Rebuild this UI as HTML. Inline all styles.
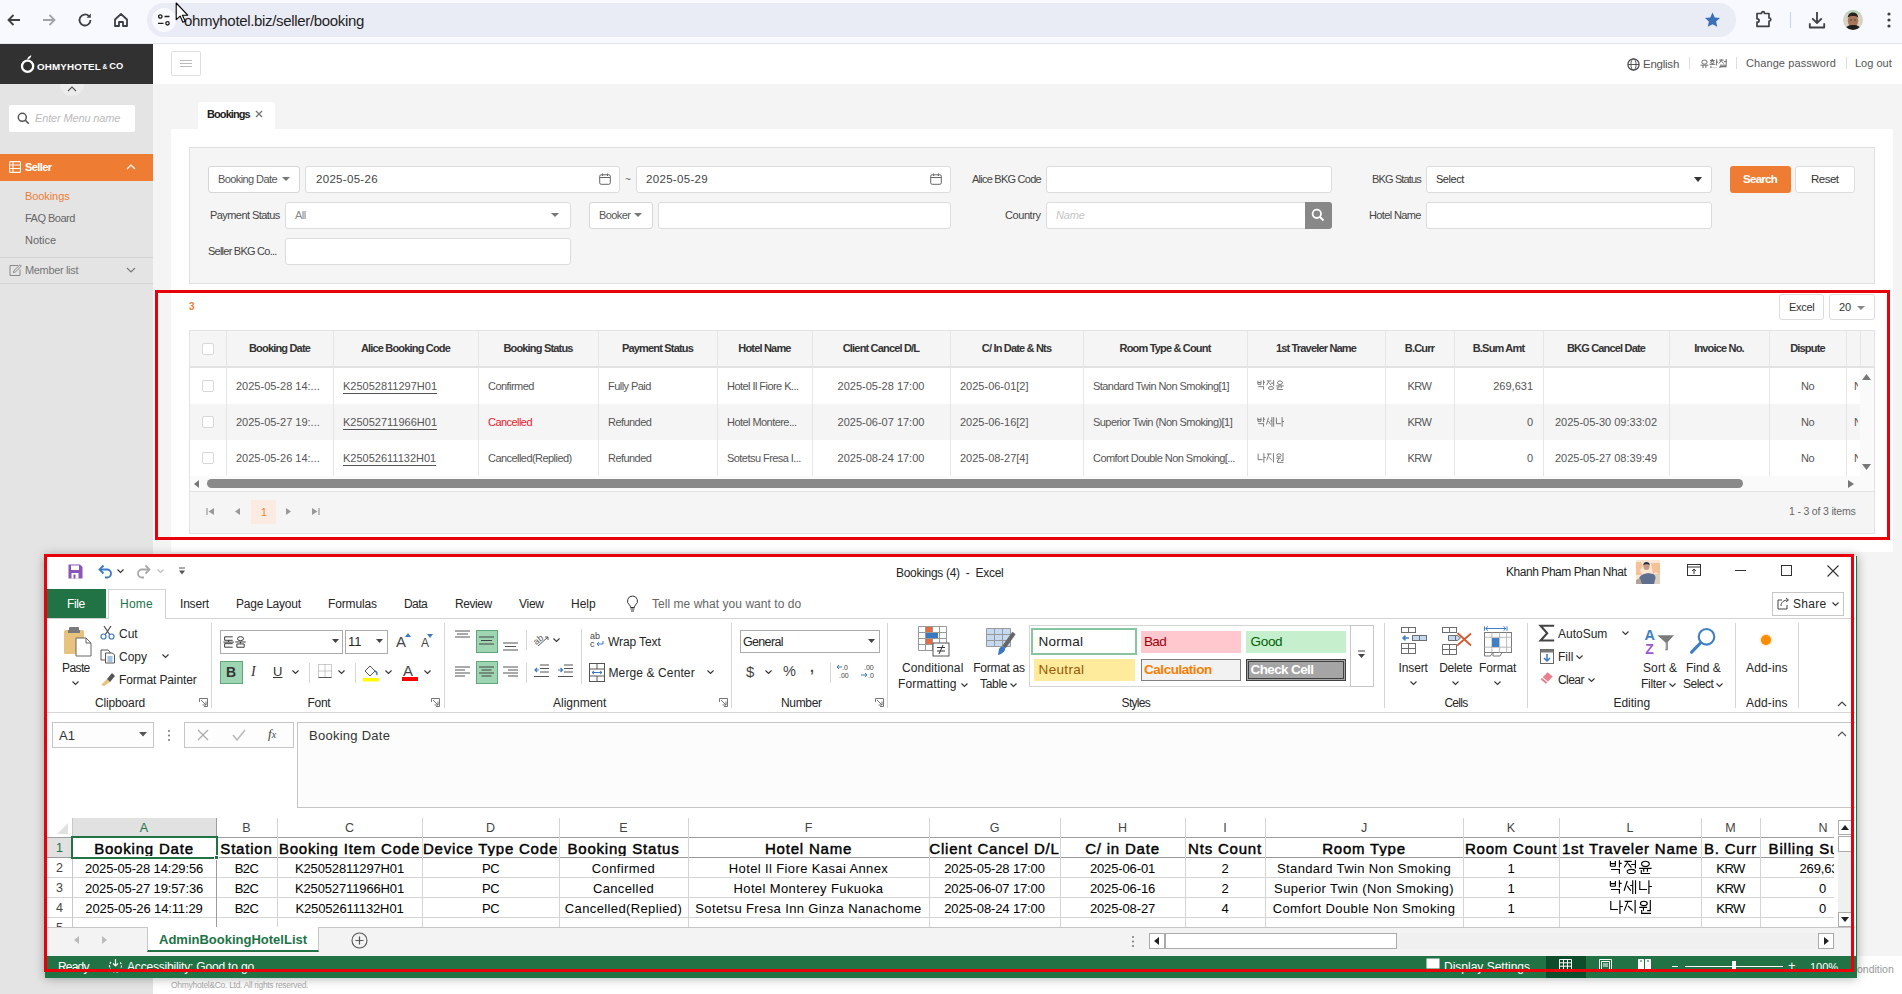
<!DOCTYPE html>
<html><head><meta charset="utf-8">
<style>
*{box-sizing:border-box;margin:0;padding:0}
html,body{width:1902px;height:994px;overflow:hidden;background:#f4f4f4;font-family:"Liberation Sans",sans-serif;color:#333;position:relative}
.a{position:absolute}
.t{position:absolute;white-space:nowrap;line-height:1}
/* browser */
#chrome{left:0;top:0;width:1902px;height:44px;background:#f8f9fe;border-bottom:1px solid #e3e5ee}
#pill{left:147px;top:3px;width:1589px;height:34px;border-radius:17px;background:#e9ebf5}
/* site */
#logo{left:0;top:44px;width:153px;height:40px;background:#313131}
#hdr{left:153px;top:44px;width:1749px;height:40px;background:#fff}
#side{left:0;top:84px;width:153px;height:910px;background:#e4e4e4}
.inp{position:absolute;background:#fff;border:1px solid #dcdcdc;border-radius:3px}
.lbl{position:absolute;white-space:nowrap;line-height:1;font-size:11px;color:#444;letter-spacing:-0.3px}
.dd{position:absolute;background:#fff;border:1px solid #d6d6d6;border-radius:3px;font-size:11px;color:#555;white-space:nowrap;line-height:1;letter-spacing:-0.3px}
.caret{position:absolute;width:0;height:0;border-left:4px solid transparent;border-right:4px solid transparent;border-top:4px solid #777}
.gh{position:absolute;top:343px;text-align:center;white-space:nowrap;line-height:1;font-size:11px;font-weight:bold;color:#333;letter-spacing:-0.82px}
.gc{position:absolute;white-space:nowrap;line-height:1;font-size:11px;color:#555;letter-spacing:-0.55px}
.gd{letter-spacing:0px}
.cb{position:absolute;width:12px;height:12px;border:1px solid #d8d8d8;border-radius:2px;background:#fff}
.rr{position:absolute;border:3px solid #e8000b}
.rb{font-size:12px;color:#262626;margin-top:1px}
.sep{width:1px;background:#d5d5d5}
.xh{position:absolute;text-align:center;white-space:nowrap;line-height:1;font-size:15px;font-weight:normal;-webkit-text-stroke:0.45px #000;color:#000;letter-spacing:0.8px;overflow:hidden}
.xc{position:absolute;text-align:center;white-space:nowrap;line-height:1;font-size:13px;color:#000}
</style></head><body>

<!-- ===== Browser chrome ===== -->
<div id="chrome" class="a"></div>
<div id="pill" class="a"></div>
<svg class="a" style="left:5px;top:11px" width="18" height="18" viewBox="0 0 18 18"><path d="M15 9H3.5M8.5 4L3.5 9l5 5" fill="none" stroke="#3c4043" stroke-width="1.8"/></svg>
<svg class="a" style="left:40px;top:11px" width="18" height="18" viewBox="0 0 18 18"><path d="M3 9h11.5M9.5 4l5 5-5 5" fill="none" stroke="#a0a3a8" stroke-width="1.8"/></svg>
<svg class="a" style="left:76px;top:11px" width="18" height="18" viewBox="0 0 18 18"><path d="M14.5 9a5.5 5.5 0 1 1-1.6-3.9" fill="none" stroke="#3c4043" stroke-width="1.8"/><path d="M14.8 2.5v4.2h-4.2z" fill="#3c4043"/></svg>
<svg class="a" style="left:112px;top:11px" width="18" height="18" viewBox="0 0 18 18"><path d="M3 8.5L9 3l6 5.5V15h-4v-4H7v4H3z" fill="none" stroke="#3c4043" stroke-width="1.8" stroke-linejoin="round"/></svg>
<div class="a" style="left:152px;top:8px;width:24px;height:24px;border-radius:12px;background:#f8f9fe"></div>
<svg class="a" style="left:156px;top:12px" width="16" height="16" viewBox="0 0 16 16"><circle cx="4.3" cy="4.5" r="1.7" fill="none" stroke="#1f1f1f" stroke-width="1.3"/><path d="M8.5 4.5h5M2 11.3h5.5" stroke="#1f1f1f" stroke-width="1.3"/><circle cx="11.5" cy="11.3" r="1.7" fill="none" stroke="#1f1f1f" stroke-width="1.3"/></svg>
<div class="t" style="left:184px;top:12.5px;font-size:15px;color:#1f1f1f;letter-spacing:-0.33px">ohmyhotel.biz/seller/booking</div>
<svg class="a" style="left:175px;top:2px" width="14" height="22" viewBox="0 0 14 22"><path d="M1.2 1v16.7l3.9-3.6 2.8 6.2 2.3-1-2.8-6.1h5.3z" fill="#fff" stroke="#000" stroke-width="1.1" stroke-linejoin="round"/></svg>
<svg class="a" style="left:1703px;top:11px" width="19" height="18" viewBox="0 0 24 24"><path d="M12 2l3 6.5 7 .8-5.2 4.8 1.5 7L12 17.6 5.7 21.1l1.5-7L2 9.3l7-.8z" fill="#3b6fb6"/></svg>
<svg class="a" style="left:1754px;top:9px" width="20" height="20" viewBox="0 0 20 20"><path d="M3 4.5h4.5v-0.3a1.5 1.5 0 0 1 3 0v0.3H15V9h0.3a1.5 1.5 0 0 1 0 3H15v5.3H3V13.2h0.4a1.7 1.7 0 0 0 0-3.4H3z" fill="none" stroke="#3c4043" stroke-width="1.7" stroke-linejoin="round"/></svg>
<div class="a" style="left:1790px;top:12px;width:1px;height:16px;background:#c6d3ef"></div>
<svg class="a" style="left:1807px;top:10px" width="20" height="20" viewBox="0 0 20 20"><path d="M10 2v11M5.2 8.3L10 13l4.8-4.7M2.8 13.2v4.3h14.4v-4.3" fill="none" stroke="#3c4043" stroke-width="1.8" stroke-linejoin="round"/></svg>
<svg class="a" style="left:1843px;top:10px" width="20" height="20" viewBox="0 0 20 20"><defs><clipPath id="cav"><circle cx="10" cy="10" r="10"/></clipPath></defs><g clip-path="url(#cav)"><rect width="20" height="20" fill="#d8d2c4"/><rect width="20" height="4" fill="#b9d3b6"/><ellipse cx="10" cy="11" rx="5.2" ry="6.5" fill="#a8765b"/><path d="M4.8 8c0-4 2.5-5.5 5.2-5.5S15.2 4 15.2 8c-1-1.5-2.5-2-5.2-2S5.8 6.5 4.8 8z" fill="#2a2220"/><path d="M2 20c1-4 4-5 8-5s7 1 8 5z" fill="#1e1e1e"/><path d="M7.3 10h1.6M11.1 10h1.6" stroke="#3a2a22" stroke-width="0.9"/></g></svg>
<svg class="a" style="left:1886px;top:11px" width="6" height="18" viewBox="0 0 6 18"><circle cx="3" cy="3" r="1.6" fill="#3c4043"/><circle cx="3" cy="9" r="1.6" fill="#3c4043"/><circle cx="3" cy="15" r="1.6" fill="#3c4043"/></svg>

<!-- ===== Site header ===== -->
<div id="logo" class="a"></div>
<svg class="a" style="left:19px;top:53px" width="18" height="22" viewBox="0 0 18 22"><circle cx="8.6" cy="13.2" r="5.6" fill="none" stroke="#fff" stroke-width="2.3"/><path d="M8.2 6.8c0.2-2.2 1.5-4 4.2-4.6c-0.3 2.2-1.6 3.6-4.2 4.6z" fill="#fff"/></svg>
<div class="t" style="left:37px;top:61.6px;font-size:9.8px;font-weight:bold;color:#fff;letter-spacing:0.15px">OHMYHOTEL</div>
<div class="t" style="left:102.5px;top:64px;font-size:6.5px;font-weight:bold;color:#fff">&amp;</div>
<div class="t" style="left:109.3px;top:61.6px;font-size:9.3px;font-weight:bold;color:#fff">CO</div>
<div id="hdr" class="a"></div>
<div class="a" style="left:171px;top:51px;width:30px;height:25px;border:1px solid #dedede;border-radius:2px;background:#fff"></div>
<div class="a" style="left:180px;top:60px;width:12px;height:1px;background:#bbb"></div>
<div class="a" style="left:180px;top:63px;width:12px;height:1px;background:#bbb"></div>
<div class="a" style="left:180px;top:66px;width:12px;height:1px;background:#bbb"></div>

<svg class="a" style="left:1627px;top:57.5px" width="13" height="13" viewBox="0 0 13 13"><circle cx="6.5" cy="6.5" r="5.6" fill="none" stroke="#444" stroke-width="1.2"/><ellipse cx="6.5" cy="6.5" rx="2.6" ry="5.6" fill="none" stroke="#444" stroke-width="0.9"/><path d="M1 6.5h11" stroke="#444" stroke-width="0.9"/></svg>
<div class="t" style="left:1643px;top:59px;font-size:11.5px;color:#555;letter-spacing:-0.24px">English</div>
<div class="a" style="left:1689px;top:57px;width:1px;height:12px;background:#ddd"></div>
<svg class="a" style="left:1699.5px;top:58.7px" width="27.5" height="9.6" viewBox="0 0 43.2 14" preserveAspectRatio="none"><g fill="none" stroke="#555" stroke-width="1.3"><path transform="translate(0.0 0)" d="M2.80 4.50a4.2 3 0 1 0 8.40 0a4.2 3 0 1 0 -8.40 0M0.8 9H13.2M4.8 9V13.8M9.2 9V13.8"/><path transform="translate(14.6 0)" d="M3.5 0.8H6M1 2.3H8.5M2.30 4.80a2.5 1.6 0 1 0 5.00 0a2.5 1.6 0 1 0 -5.00 0M4.8 6.4V7.8M0.5 7.8H9.5M11.5 0.2V9.5M11.5 4.5H13.8M2.5 10V13.5H12.5"/><path transform="translate(29.2 0)" d="M4.5 0.2V1.6M1 1.6H8M4.5 1.6L0.8 6.5M4.5 3.5L8.2 6.5M12 0.2V8.5M8.5 3.8H12M2 9H12V11H2V13.5H12.5"/></g></svg>
<div class="a" style="left:1736px;top:57px;width:1px;height:12px;background:#ddd"></div>
<div class="t" style="left:1746px;top:58.3px;font-size:11px;color:#555;letter-spacing:0.09px">Change password</div>
<div class="a" style="left:1846px;top:57px;width:1px;height:12px;background:#ddd"></div>
<div class="t" style="left:1855px;top:58.3px;font-size:11px;color:#555">Log out</div>

<!-- ===== Sidebar ===== -->
<div id="side" class="a"></div>
<div class="a" style="left:60px;top:72px;width:24px;height:24px;border-radius:12px;background:#ececec;clip-path:inset(12px 0 0 0)"></div>
<svg class="a" style="left:67px;top:86px" width="10" height="6" viewBox="0 0 10 6"><path d="M1 5l4-4 4 4" fill="none" stroke="#555" stroke-width="1.1"/></svg>
<div class="a" style="left:9px;top:105px;width:126px;height:27px;background:#fff;border-radius:2px"></div>
<svg class="a" style="left:17px;top:112px" width="13" height="13" viewBox="0 0 13 13"><circle cx="5.3" cy="5.3" r="4" fill="none" stroke="#555" stroke-width="1.5"/><path d="M8.3 8.3l3.5 3.5" stroke="#555" stroke-width="1.6"/></svg>
<div class="t" style="left:35px;top:113px;font-size:11px;color:#bbb;font-style:italic;letter-spacing:-0.15px">Enter Menu name</div>
<div class="a" style="left:0;top:154px;width:153px;height:27px;background:#ee7d33"></div>
<svg class="a" style="left:9px;top:161px" width="12" height="12" viewBox="0 0 12 12"><rect x="0.6" y="0.6" width="10.8" height="10.8" rx="1" fill="none" stroke="#fff" stroke-width="1.1"/><path d="M0.6 4h10.8M0.6 7.5h10.8M4 0.6v10.8" stroke="#fff" stroke-width="1"/></svg>
<div class="t" style="left:25px;top:162px;font-size:11px;font-weight:bold;color:#fff;letter-spacing:-0.57px">Seller</div>
<svg class="a" style="left:126px;top:164px" width="10" height="6" viewBox="0 0 10 6"><path d="M1 5l4-4 4 4" fill="none" stroke="#fff" stroke-width="1.2"/></svg>
<div class="t" style="left:25px;top:191px;font-size:11px;color:#ee7d33;letter-spacing:-0.08px">Bookings</div>
<div class="t" style="left:25px;top:213px;font-size:11px;color:#666;letter-spacing:-0.51px">FAQ Board</div>
<div class="t" style="left:25px;top:235px;font-size:11px;color:#666;letter-spacing:-0.02px">Notice</div>
<div class="a" style="left:0;top:257px;width:153px;height:1px;background:#d4d4d4"></div>
<svg class="a" style="left:9px;top:264px" width="13" height="13" viewBox="0 0 13 13"><path d="M9 1.5h-8v10h10v-6" fill="none" stroke="#888" stroke-width="1"/><path d="M4.5 8.5l.5-2L11 0.8l1.3 1.3-6 5.9z" fill="none" stroke="#888" stroke-width="1"/></svg>
<div class="t" style="left:25px;top:265px;font-size:11px;color:#777;letter-spacing:-0.34px">Member list</div>
<svg class="a" style="left:126px;top:267px" width="10" height="6" viewBox="0 0 10 6"><path d="M1 1l4 4 4-4" fill="none" stroke="#777" stroke-width="1.1"/></svg>
<div class="a" style="left:0;top:283px;width:153px;height:1px;background:#d4d4d4"></div>

<!-- ===== Main ===== -->
<div class="a" style="left:198px;top:102px;width:77px;height:27px;background:#fff;border-radius:3px 3px 0 0"></div>
<div class="t" style="left:207px;top:109px;font-size:11px;font-weight:bold;color:#222;letter-spacing:-0.91px">Bookings</div>
<svg class="a" style="left:255px;top:110px" width="8" height="8" viewBox="0 0 8 8"><path d="M1 1l6 6M7 1L1 7" stroke="#777" stroke-width="1.4"/></svg>
<div class="a" style="left:171px;top:129px;width:1722px;height:423px;background:#fff"></div>

<!-- filter box -->
<div class="a" style="left:189px;top:147px;width:1686px;height:137px;background:#f5f5f5;border:1px solid #e0e0e0"></div>
<div class="dd" style="left:208px;top:166px;width:92px;height:27px;padding:7px 0 0 9px;letter-spacing:-0.59px">Booking Date</div>
<div class="caret" style="left:282px;top:177px"></div>
<div class="inp" style="left:305px;top:166px;width:315px;height:27px"></div>
<div class="t" style="left:316px;top:174px;font-size:11.5px;color:#444;letter-spacing:0.31px">2025-05-26</div>
<svg class="a" style="left:599px;top:173px" width="12" height="12" viewBox="0 0 12 12"><rect x="0.7" y="1.8" width="10.6" height="9.5" rx="1.5" fill="none" stroke="#666" stroke-width="1"/><path d="M0.7 4.5h10.6M3.5 0.5v2.5M8.5 0.5v2.5" stroke="#666" stroke-width="1"/></svg>
<div class="t" style="left:625px;top:175px;font-size:10px;color:#666">~</div>
<div class="inp" style="left:636px;top:166px;width:315px;height:27px"></div>
<div class="t" style="left:646px;top:174px;font-size:11.5px;color:#444;letter-spacing:0.32px">2025-05-29</div>
<svg class="a" style="left:930px;top:173px" width="12" height="12" viewBox="0 0 12 12"><rect x="0.7" y="1.8" width="10.6" height="9.5" rx="1.5" fill="none" stroke="#666" stroke-width="1"/><path d="M0.7 4.5h10.6M3.5 0.5v2.5M8.5 0.5v2.5" stroke="#666" stroke-width="1"/></svg>
<div class="lbl" style="left:972px;top:174px;letter-spacing:-0.76px">Alice BKG Code</div>
<div class="inp" style="left:1046px;top:166px;width:286px;height:27px"></div>
<div class="lbl" style="left:1372px;top:174px;letter-spacing:-0.85px">BKG Status</div>
<div class="inp" style="left:1426px;top:166px;width:286px;height:27px"></div>
<div class="t" style="left:1436px;top:174px;font-size:11px;color:#333;letter-spacing:-0.47px">Select</div>
<div class="caret" style="left:1694px;top:177px;border-top-color:#333;border-width:5px 4px 0 4px"></div>
<div class="a" style="left:1730px;top:166px;width:61px;height:27px;background:#ee7d33;border-radius:3px"></div>
<div class="t" style="left:1743px;top:174px;font-size:11.5px;font-weight:bold;color:#fff;letter-spacing:-0.72px">Search</div>
<div class="inp" style="left:1795px;top:166px;width:60px;height:27px;border-color:#ddd"></div>
<div class="t" style="left:1811px;top:174px;font-size:11.5px;color:#333;letter-spacing:-0.52px">Reset</div>

<div class="lbl" style="left:210px;top:210px;letter-spacing:-0.57px">Payment Status</div>
<div class="inp" style="left:285px;top:202px;width:286px;height:27px"></div>
<div class="t" style="left:295px;top:210px;font-size:11px;color:#888;letter-spacing:-0.53px">All</div>
<div class="caret" style="left:551px;top:213px"></div>
<div class="dd" style="left:589px;top:202px;width:64px;height:27px;padding:7px 0 0 9px;letter-spacing:-0.6px">Booker</div>
<div class="caret" style="left:634px;top:213px"></div>
<div class="inp" style="left:658px;top:202px;width:293px;height:27px"></div>
<div class="lbl" style="left:1005px;top:210px;letter-spacing:-0.43px">Country</div>
<div class="inp" style="left:1046px;top:202px;width:286px;height:27px"></div>
<div class="t" style="left:1056px;top:210px;font-size:11px;color:#c4c4c4;font-style:italic;letter-spacing:-0.17px">Name</div>
<div class="a" style="left:1305px;top:202px;width:27px;height:27px;background:#888;border-radius:0 3px 3px 0"></div>
<svg class="a" style="left:1311px;top:208px" width="14" height="14" viewBox="0 0 14 14"><circle cx="5.8" cy="5.8" r="4.2" fill="none" stroke="#fff" stroke-width="1.8"/><path d="M9 9l3.5 3.5" stroke="#fff" stroke-width="2"/></svg>
<div class="lbl" style="left:1369px;top:210px;letter-spacing:-0.64px">Hotel Name</div>
<div class="inp" style="left:1426px;top:202px;width:286px;height:27px"></div>

<div class="lbl" style="left:208px;top:246px;letter-spacing:-0.76px">Seller BKG Co...</div>
<div class="inp" style="left:285px;top:238px;width:286px;height:27px"></div>

<!-- grid -->
<div class="a" style="left:158px;top:293px;width:13px;height:244px;background:#f4f4f4"></div>
<div class="t" style="left:189px;top:302px;font-size:10px;font-weight:bold;color:#ee7d33">3</div>
<div class="a" style="left:1779px;top:294px;width:45px;height:26px;border:1px solid #ddd;border-radius:3px;background:#fff"></div>
<div class="t" style="left:1789px;top:302px;font-size:11px;color:#333;letter-spacing:-0.3px">Excel</div>
<div class="a" style="left:1829px;top:294px;width:46px;height:26px;border:1px solid #ddd;border-radius:3px;background:#fff"></div>
<div class="t" style="left:1839px;top:302px;font-size:11px;color:#333">20</div>
<div class="caret" style="left:1857px;top:306px;border-top-color:#888"></div>
<div class="a" style="left:189px;top:330px;width:1686px;height:204px;border:1px solid #e3e3e3;background:#fff"></div>
<div class="a" style="left:190px;top:331px;width:1684px;height:35px;background:#f5f5f5"></div>
<div class="a" style="left:1860px;top:331px;width:1px;height:35px;background:#e6e6e6"></div>
<div class="a" style="left:190px;top:366px;width:1684px;height:2px;background:#e2e2e2"></div>
<div class="a" style="left:190px;top:404px;width:1670px;height:36px;background:#f5f5f5"></div>
<div class="a" style="left:190px;top:476px;width:1684px;height:15px;background:#fafafa"></div>
<div class="a" style="left:207px;top:479px;width:1536px;height:9px;border-radius:4.5px;background:#898989"></div>
<svg class="a" style="left:194px;top:479.5px" width="6" height="8" viewBox="0 0 6 8"><path d="M5 0v8L0 4z" fill="#777"/></svg>
<svg class="a" style="left:1848px;top:479.5px" width="6" height="8" viewBox="0 0 6 8"><path d="M0 0v8l6-4z" fill="#777"/></svg>
<div class="a" style="left:1860px;top:368px;width:14px;height:108px;background:#fafafa"></div>
<svg class="a" style="left:1862px;top:374px" width="9" height="6" viewBox="0 0 9 6"><path d="M0 6h9L4.5 0z" fill="#777"/></svg>
<svg class="a" style="left:1862px;top:464px" width="9" height="6" viewBox="0 0 9 6"><path d="M0 0h9L4.5 6z" fill="#777"/></svg>
<div class="a" style="left:190px;top:491px;width:1684px;height:42px;background:#f5f5f5;border-top:1px solid #e3e3e3"></div>
<div class="a" style="left:251px;top:500px;width:25px;height:24px;background:#fbebe0"></div>
<div class="t" style="left:261px;top:507px;font-size:10.5px;color:#ee7d33">1</div>
<svg class="a" style="left:206px;top:507px" width="9" height="9" viewBox="0 0 9 9"><path d="M1 1v7" stroke="#999" stroke-width="1.2"/><path d="M8 1v7L2.5 4.5z" fill="#999"/></svg>
<svg class="a" style="left:234px;top:507px" width="7" height="9" viewBox="0 0 7 9"><path d="M6 1v7L1 4.5z" fill="#999"/></svg>
<svg class="a" style="left:285px;top:507px" width="7" height="9" viewBox="0 0 7 9"><path d="M1 1v7l5-3.5z" fill="#999"/></svg>
<svg class="a" style="left:311px;top:507px" width="9" height="9" viewBox="0 0 9 9"><path d="M8 1v7" stroke="#999" stroke-width="1.2"/><path d="M1 1v7l5.5-3.5z" fill="#999"/></svg>
<div class="t" style="left:1789px;top:506px;font-size:10.5px;color:#666;letter-spacing:-0.18px">1 - 3 of 3 items</div>
<div class="a" style="left:226px;top:331px;width:1px;height:145px;background:#e6e6e6"></div>
<div class="a" style="left:333px;top:331px;width:1px;height:145px;background:#e6e6e6"></div>
<div class="a" style="left:478px;top:331px;width:1px;height:145px;background:#e6e6e6"></div>
<div class="a" style="left:598px;top:331px;width:1px;height:145px;background:#e6e6e6"></div>
<div class="a" style="left:717px;top:331px;width:1px;height:145px;background:#e6e6e6"></div>
<div class="a" style="left:812px;top:331px;width:1px;height:145px;background:#e6e6e6"></div>
<div class="a" style="left:950px;top:331px;width:1px;height:145px;background:#e6e6e6"></div>
<div class="a" style="left:1083px;top:331px;width:1px;height:145px;background:#e6e6e6"></div>
<div class="a" style="left:1247px;top:331px;width:1px;height:145px;background:#e6e6e6"></div>
<div class="a" style="left:1385px;top:331px;width:1px;height:145px;background:#e6e6e6"></div>
<div class="a" style="left:1454px;top:331px;width:1px;height:145px;background:#e6e6e6"></div>
<div class="a" style="left:1543px;top:331px;width:1px;height:145px;background:#e6e6e6"></div>
<div class="a" style="left:1669px;top:331px;width:1px;height:145px;background:#e6e6e6"></div>
<div class="a" style="left:1769px;top:331px;width:1px;height:145px;background:#e6e6e6"></div>
<div class="a" style="left:1846px;top:331px;width:1px;height:145px;background:#e6e6e6"></div>
<div class="gh" style="left:226px;width:107px">Booking Date</div>
<div class="gh" style="left:333px;width:145px">Alice Booking Code</div>
<div class="gh" style="left:478px;width:120px">Booking Status</div>
<div class="gh" style="left:598px;width:119px">Payment Status</div>
<div class="gh" style="left:717px;width:95px">Hotel Name</div>
<div class="gh" style="left:812px;width:138px">Client Cancel D/L</div>
<div class="gh" style="left:950px;width:133px">C/ In Date &amp; Nts</div>
<div class="gh" style="left:1083px;width:164px">Room Type &amp; Count</div>
<div class="gh" style="left:1247px;width:138px">1st Traveler Name</div>
<div class="gh" style="left:1385px;width:69px">B.Curr</div>
<div class="gh" style="left:1454px;width:89px">B.Sum Amt</div>
<div class="gh" style="left:1543px;width:126px">BKG Cancel Date</div>
<div class="gh" style="left:1669px;width:100px">Invoice No.</div>
<div class="gh" style="left:1769px;width:77px">Dispute</div>
<div class="cb" style="left:202px;top:343px"></div>
<div class="cb" style="left:202px;top:380px"></div>
<div class="gc gd" style="left:226px;width:107px;top:381px;padding-left:10px;text-align:left;">2025-05-28 14:...</div>
<div class="gc gd" style="left:333px;width:145px;top:381px;padding-left:10px;text-align:left;"><span style="border-bottom:1px solid #555;padding-bottom:1px">K25052811297H01</span></div>
<div class="gc" style="left:478px;width:120px;top:381px;padding-left:10px;text-align:left;">Confirmed</div>
<div class="gc" style="left:598px;width:119px;top:381px;padding-left:10px;text-align:left;">Fully Paid</div>
<div class="gc" style="left:717px;width:95px;top:381px;padding-left:10px;text-align:left;">Hotel Il Fiore K...</div>
<div class="gc gd" style="left:812px;width:138px;top:381px;text-align:center;">2025-05-28 17:00</div>
<div class="gc gd" style="left:950px;width:133px;top:381px;padding-left:10px;text-align:left;">2025-06-01[2]</div>
<div class="gc" style="left:1083px;width:164px;top:381px;padding-left:10px;text-align:left;">Standard Twin Non Smoking[1]</div>
<svg class="a" style="left:1256.7px;top:380.4px" width="27" height="9.8" viewBox="0 0 43.2 14" preserveAspectRatio="none"><g fill="none" stroke="#666" stroke-width="1.3"><path transform="translate(0.0 0)" d="M1.4 1V6.2M6.4 1V6.2M1.4 3.6H6.4M1.4 6.2H6.4M10.5 0.2V7.5M10.5 3.3H12.8M2 9.5H10.5V13.8"/><path transform="translate(14.6 0)" d="M1 1.3H8.3M4.6 1.5L0.7 7.5M4.6 3.6L8 7.5M12 0.2V8.6M7.8 4.5H12M3.60 11.50a4.2 2.1 0 1 0 8.40 0a4.2 2.1 0 1 0 -8.40 0"/><path transform="translate(29.2 0)" d="M3.60 3.90a3.9 2.6 0 1 0 7.80 0a3.9 2.6 0 1 0 -7.80 0M1.1 8.4H13.7M5.8 8.4V11.7M9.5 8.4V11.7M3.3 9.9V13.6H12.1"/></g></svg>
<div class="gc" style="left:1385px;width:69px;top:381px;text-align:center;">KRW</div>
<div class="gc gd" style="left:1454px;width:89px;top:381px;padding-right:10px;text-align:right;">269,631</div>
<div class="gc" style="left:1769px;width:77px;top:381px;text-align:center;">No</div>
<div class="gc" style="left:1846px;width:14px;top:381px;padding-left:10px;text-align:left;overflow:hidden;padding-left:8px;width:12px;">N</div>
<div class="cb" style="left:202px;top:416px"></div>
<div class="gc gd" style="left:226px;width:107px;top:417px;padding-left:10px;text-align:left;">2025-05-27 19:...</div>
<div class="gc gd" style="left:333px;width:145px;top:417px;padding-left:10px;text-align:left;"><span style="border-bottom:1px solid #555;padding-bottom:1px">K25052711966H01</span></div>
<div class="gc" style="left:478px;width:120px;top:417px;padding-left:10px;text-align:left;color:#e8202e;">Cancelled</div>
<div class="gc" style="left:598px;width:119px;top:417px;padding-left:10px;text-align:left;">Refunded</div>
<div class="gc" style="left:717px;width:95px;top:417px;padding-left:10px;text-align:left;">Hotel Montere...</div>
<div class="gc gd" style="left:812px;width:138px;top:417px;text-align:center;">2025-06-07 17:00</div>
<div class="gc gd" style="left:950px;width:133px;top:417px;padding-left:10px;text-align:left;">2025-06-16[2]</div>
<div class="gc" style="left:1083px;width:164px;top:417px;padding-left:10px;text-align:left;">Superior Twin (Non Smoking)[1]</div>
<svg class="a" style="left:1256.7px;top:416.9px" width="27" height="9.8" viewBox="0 0 43.2 14" preserveAspectRatio="none"><g fill="none" stroke="#666" stroke-width="1.3"><path transform="translate(0.0 0)" d="M1.4 1V6.2M6.4 1V6.2M1.4 3.6H6.4M1.4 6.2H6.4M10.5 0.2V7.5M10.5 3.3H12.8M2 9.5H10.5V13.8"/><path transform="translate(14.6 0)" d="M3.8 1L0.6 10.7M3.8 5.9L7.3 10.7M6.7 5.5H9.3M9.3 0.2V13.9M12.1 0.2V13.9"/><path transform="translate(29.2 0)" d="M1.8 1V9.5H9M11 0.2V13.9M11 6.5H14"/></g></svg>
<div class="gc" style="left:1385px;width:69px;top:417px;text-align:center;">KRW</div>
<div class="gc gd" style="left:1454px;width:89px;top:417px;padding-right:10px;text-align:right;">0</div>
<div class="gc gd" style="left:1543px;width:126px;top:417px;text-align:center;">2025-05-30 09:33:02</div>
<div class="gc" style="left:1769px;width:77px;top:417px;text-align:center;">No</div>
<div class="gc" style="left:1846px;width:14px;top:417px;padding-left:10px;text-align:left;overflow:hidden;padding-left:8px;width:12px;">N</div>
<div class="cb" style="left:202px;top:452px"></div>
<div class="gc gd" style="left:226px;width:107px;top:453px;padding-left:10px;text-align:left;">2025-05-26 14:...</div>
<div class="gc gd" style="left:333px;width:145px;top:453px;padding-left:10px;text-align:left;"><span style="border-bottom:1px solid #555;padding-bottom:1px">K25052611132H01</span></div>
<div class="gc" style="left:478px;width:120px;top:453px;padding-left:10px;text-align:left;">Cancelled(Replied)</div>
<div class="gc" style="left:598px;width:119px;top:453px;padding-left:10px;text-align:left;">Refunded</div>
<div class="gc" style="left:717px;width:95px;top:453px;padding-left:10px;text-align:left;">Sotetsu Fresa I...</div>
<div class="gc gd" style="left:812px;width:138px;top:453px;text-align:center;">2025-08-24 17:00</div>
<div class="gc gd" style="left:950px;width:133px;top:453px;padding-left:10px;text-align:left;">2025-08-27[4]</div>
<div class="gc" style="left:1083px;width:164px;top:453px;padding-left:10px;text-align:left;">Comfort Double Non Smoking[...</div>
<svg class="a" style="left:1256.7px;top:452.9px" width="27" height="9.8" viewBox="0 0 43.2 14" preserveAspectRatio="none"><g fill="none" stroke="#666" stroke-width="1.3"><path transform="translate(0.0 0)" d="M1.8 1V9.5H9M11 0.2V13.9M11 6.5H14"/><path transform="translate(14.6 0)" d="M1.2 1.4H8.5M4.6 1.4L0.8 10.6M4.6 6L9.3 10.6M11.7 0.1V13.6"/><path transform="translate(29.2 0)" d="M2.50 3.40a3.4 2.2 0 1 0 6.80 0a3.4 2.2 0 1 0 -6.80 0M1.3 7.4H9.2M5.5 7.4V10.8M9.2 10.6H12.4M12.4 0.1V11.2M3.7 10V13.4H13"/></g></svg>
<div class="gc" style="left:1385px;width:69px;top:453px;text-align:center;">KRW</div>
<div class="gc gd" style="left:1454px;width:89px;top:453px;padding-right:10px;text-align:right;">0</div>
<div class="gc gd" style="left:1543px;width:126px;top:453px;text-align:center;">2025-05-27 08:39:49</div>
<div class="gc" style="left:1769px;width:77px;top:453px;text-align:center;">No</div>
<div class="gc" style="left:1846px;width:14px;top:453px;padding-left:10px;text-align:left;overflow:hidden;padding-left:8px;width:12px;">N</div>
<div class="rr" style="left:155px;top:290px;width:1735px;height:250px"></div>
<!--GRID-->
<!-- footer -->
<div class="a" style="left:153px;top:956px;width:1749px;height:38px;background:#fff"></div>
<div class="t" style="left:171px;top:981px;font-size:8.5px;color:#aaa;letter-spacing:-0.3px">Ohmyhotel&amp;Co. Ltd. All rights reserved.</div>
<div class="t" style="left:1857px;top:964px;font-size:10.5px;color:#999">ondition</div>
<!-- ===== Excel window ===== -->
<div class="a" style="left:45px;top:556px;width:1812px;height:422px;background:#fff;box-shadow:0 0 10px rgba(0,0,0,0.35)"></div>
<!-- title bar -->
<svg class="a" style="left:68px;top:564px" width="15" height="15" viewBox="0 0 15 15"><path d="M0.5 0.5h11.5l2.5 2.5v11.5h-14z" fill="#8a55b7"/><rect x="3" y="1.5" width="8" height="4.5" fill="#fff"/><rect x="3.5" y="9" width="7" height="5.5" fill="#fff"/><rect x="5.5" y="10.5" width="2" height="4" fill="#8a55b7"/></svg>
<svg class="a" style="left:97px;top:564px" width="16" height="15" viewBox="0 0 16 15"><path d="M3 5.5h7a4 4 0 0 1 0 8H8" fill="none" stroke="#3b78c3" stroke-width="1.8"/><path d="M6.5 1.5L2.5 5.5l4 4" fill="none" stroke="#3b78c3" stroke-width="1.8"/></svg>
<svg class="a" style="left:117px;top:569px" width="7" height="5" viewBox="0 0 7 5"><path d="M0.5 0.5l3 3 3-3" fill="none" stroke="#333" stroke-width="1.1"/></svg>
<svg class="a" style="left:136px;top:564px" width="16" height="15" viewBox="0 0 16 15"><path d="M13 5.5H6a4 4 0 0 0 0 8h2" fill="none" stroke="#a8a8a8" stroke-width="1.8"/><path d="M9.5 1.5l4 4-4 4" fill="none" stroke="#a8a8a8" stroke-width="1.8"/></svg>
<svg class="a" style="left:157px;top:569px" width="7" height="5" viewBox="0 0 7 5"><path d="M0.5 0.5l3 3 3-3" fill="none" stroke="#bbb" stroke-width="1.1"/></svg>
<svg class="a" style="left:178px;top:567px" width="8" height="9" viewBox="0 0 8 9"><path d="M1 1h6" stroke="#555" stroke-width="1"/><path d="M1 3.5h6L4 7.5z" fill="#555"/></svg>
<div class="t" style="left:896px;top:567px;font-size:12px;color:#262626;letter-spacing:-0.3px">Bookings (4)&nbsp; -&nbsp; Excel</div>
<div class="t" style="left:1506px;top:566px;font-size:12px;color:#262626;letter-spacing:-0.45px">Khanh Pham Phan Nhat</div>
<svg class="a" style="left:1636px;top:560px" width="24" height="24" viewBox="0 0 24 24"><rect width="24" height="24" fill="#fbe6d3"/><path d="M0 2h5l2 4-3 4 2 5H0zM15 3h9v12l-4-3-3 2z" fill="#f4b98a" opacity="0.8"/><rect x="17" y="14" width="7" height="10" fill="#ddd0bd"/><path d="M2 24c0-7 3-9 6-10l4-1 5 1c2 1 2.5 2 2.5 4L18 24z" fill="#5f6f8f"/><ellipse cx="10.5" cy="6.5" rx="3" ry="3.5" fill="#c99b84"/><path d="M7.2 5.5c0-2.5 1.5-3.5 3.3-3.5s3.3 1 3.3 3.3c-1-0.8-2-1-3.3-1s-2.3 0.3-3.3 1.2z" fill="#23304a"/><path d="M0 20l4-2 2 6H0z" fill="#b0a595"/></svg>
<svg class="a" style="left:1687px;top:564px" width="14" height="12" viewBox="0 0 14 12"><rect x="0.5" y="0.5" width="13" height="11" fill="none" stroke="#333" stroke-width="1"/><path d="M0.5 3h13M7 10V5M5 7l2-2 2 2" fill="none" stroke="#333" stroke-width="1"/></svg>
<div class="a" style="left:1735px;top:570px;width:11px;height:1px;background:#333"></div>
<div class="a" style="left:1781px;top:565px;width:11px;height:11px;border:1px solid #333"></div>
<svg class="a" style="left:1827px;top:565px" width="12" height="12" viewBox="0 0 12 12"><path d="M0.5 0.5l11 11M11.5 0.5l-11 11" stroke="#333" stroke-width="1.1"/></svg>
<!-- tabs -->
<div class="a" style="left:47px;top:589px;width:59px;height:29px;background:#217346"></div>
<div class="t" style="left:67px;top:598px;font-size:12px;color:#fff;letter-spacing:-0.41px">File</div>
<div class="a" style="left:108px;top:589px;width:58px;height:30px;background:#fff;border:1px solid #d2d2d2;border-bottom:none"></div>
<div class="a" style="left:47px;top:618px;width:1808px;height:1px;background:#d2d2d2"></div>
<div class="a" style="left:109px;top:618px;width:56px;height:1px;background:#fff"></div>
<div class="t" style="left:120px;top:598px;font-size:12px;color:#217346;letter-spacing:0.22px">Home</div>
<div class="t" style="left:180px;top:598px;font-size:12px;color:#262626;letter-spacing:-0.2px">Insert</div>
<div class="t" style="left:236px;top:598px;font-size:12px;color:#262626;letter-spacing:-0.24px">Page Layout</div>
<div class="t" style="left:328px;top:598px;font-size:12px;color:#262626;letter-spacing:-0.14px">Formulas</div>
<div class="t" style="left:404px;top:598px;font-size:12px;color:#262626;letter-spacing:-0.59px">Data</div>
<div class="t" style="left:455px;top:598px;font-size:12px;color:#262626;letter-spacing:-0.46px">Review</div>
<div class="t" style="left:518.9px;top:598px;font-size:12px;color:#262626;letter-spacing:-0.22px">View</div>
<div class="t" style="left:571px;top:598px;font-size:12px;color:#262626">Help</div>
<svg class="a" style="left:626px;top:595px" width="13" height="17" viewBox="0 0 13 17"><path d="M6.5 1a5 5 0 0 0-3 9c.8.7 1 1.5 1 2.5h4c0-1 .2-1.8 1-2.5a5 5 0 0 0-3-9z" fill="none" stroke="#333" stroke-width="1"/><path d="M4.5 14h4M5 16h3" stroke="#333" stroke-width="1"/></svg>
<div class="t" style="left:652px;top:598px;font-size:12px;color:#666;letter-spacing:0.04px">Tell me what you want to do</div>
<div class="a" style="left:1772px;top:592px;width:72px;height:24px;border:1px solid #c6c6c6;background:#fff"></div>
<svg class="a" style="left:1777px;top:597px" width="13" height="13" viewBox="0 0 13 13"><path d="M5 3H1v9h9V8" fill="none" stroke="#444" stroke-width="1"/><path d="M4 9c0-4 3-6 7-6M9 1l2.5 2L9 5" fill="none" stroke="#444" stroke-width="1"/></svg>
<div class="t" style="left:1793px;top:598px;font-size:12px;color:#262626;letter-spacing:0.31px">Share</div>
<svg class="a" style="left:1832px;top:602px" width="7" height="5" viewBox="0 0 7 5"><path d="M0.5 0.5l3 3 3-3" fill="none" stroke="#333" stroke-width="1.1"/></svg>
<!-- ribbon body -->
<div class="a" style="left:47px;top:712px;width:1808px;height:1px;background:#d5d5d5"></div>
<!-- clipboard -->
<svg class="a" style="left:63px;top:626px" width="30" height="31" viewBox="0 0 30 31"><rect x="1" y="4" width="20" height="24" rx="1.5" fill="#e8c37f"/><rect x="6" y="1" width="10" height="5" rx="1" fill="#7a7a7a"/><rect x="5" y="4" width="12" height="3" fill="#7a7a7a"/><path d="M13 12h10l5 5v13H13z" fill="#fff" stroke="#666" stroke-width="1"/><path d="M23 12v5h5" fill="none" stroke="#666" stroke-width="1"/></svg>
<div class="t rb" style="left:62px;top:661px;letter-spacing:-0.6px">Paste</div>
<svg class="a rc" style="left:72px;top:681px" width="7" height="5" viewBox="0 0 7 5"><path d="M0.5 0.5l3 3 3-3" fill="none" stroke="#333" stroke-width="1.1"/></svg>
<svg class="a" style="left:100px;top:625px" width="15" height="15" viewBox="0 0 15 15"><path d="M4 1l6 9M11 1L5 10" stroke="#555" stroke-width="1.3"/><circle cx="3.5" cy="11.5" r="2.5" fill="none" stroke="#3b78c3" stroke-width="1.2"/><circle cx="11.5" cy="11.5" r="2.5" fill="none" stroke="#3b78c3" stroke-width="1.2"/></svg>
<div class="t rb" style="left:119px;top:627px">Cut</div>
<svg class="a" style="left:100px;top:649px" width="16" height="15" viewBox="0 0 16 15"><path d="M1 1h7l2 2v8H1z" fill="#fff" stroke="#555" stroke-width="1"/><path d="M5.5 4h7l2 2v8h-9z" fill="#fff" stroke="#555" stroke-width="1"/><path d="M7.5 8h5M7.5 10h5M7.5 12h5" stroke="#3b78c3" stroke-width="0.9"/></svg>
<div class="t rb" style="left:119px;top:650px">Copy</div>
<svg class="a" style="left:162px;top:654px" width="7" height="5" viewBox="0 0 7 5"><path d="M0.5 0.5l3 3 3-3" fill="none" stroke="#333" stroke-width="1.1"/></svg>
<svg class="a" style="left:100px;top:671px" width="17" height="16" viewBox="0 0 17 16"><path d="M1 14l6-6 3 3-6 4z" fill="#e8c37f"/><path d="M7 8l5-6 3 3-5 6z" fill="#555"/></svg>
<div class="t rb" style="left:119px;top:673px;letter-spacing:-0.13px">Format Painter</div>
<div class="t rb" style="left:95px;top:696px;letter-spacing:-0.15px">Clipboard</div>
<svg class="a" style="left:199px;top:698px" width="9" height="9" viewBox="0 0 9 9"><path d="M0.5 4V0.5h8v8H5" fill="none" stroke="#666" stroke-width="0.9"/><path d="M2 2l5 5M7 3.5V7H3.5" fill="none" stroke="#666" stroke-width="0.9"/></svg>
<div class="a sep" style="left:211px;top:623px;height:85px"></div>
<!-- font -->
<div class="a" style="left:220px;top:630px;width:123px;height:24px;border:1px solid #ababab;background:#fff"></div>
<svg class="a" style="left:223.3px;top:636px" width="23.2" height="11.6" viewBox="0 0 28.6 14" preserveAspectRatio="none"><g fill="none" stroke="#262626" stroke-width="1.1"><path transform="translate(0.0 0)" d="M12 1H2V5.2H12M7 5.2V7.4M0.5 7.4H13.5M12 9.3H2V13.5H12"/><path transform="translate(14.6 0)" d="M3.20 3.20a3.8 2.4 0 1 0 7.60 0a3.8 2.4 0 1 0 -7.60 0M0.5 7.2H13.5M7 7.2V9M2.5 9.6H11.5V13.6H2.5Z"/></g></svg>
<svg class="a" style="left:332px;top:639px" width="7" height="5" viewBox="0 0 7 5"><path d="M0 0h7L3.5 4z" fill="#444"/></svg>
<div class="a" style="left:345px;top:630px;width:43px;height:24px;border:1px solid #ababab;background:#fff"></div>
<div class="t" style="left:348px;top:635px;font-size:13px;color:#262626">11</div>
<svg class="a" style="left:376px;top:639px" width="7" height="5" viewBox="0 0 7 5"><path d="M0 0h7L3.5 4z" fill="#444"/></svg>
<div class="t" style="left:396px;top:634px;font-size:15px;color:#444">A</div>
<svg class="a" style="left:405px;top:633px" width="6" height="4" viewBox="0 0 6 4"><path d="M0 4h6L3 0z" fill="#3b78c3"/></svg>
<div class="t" style="left:421px;top:637px;font-size:12px;color:#444">A</div>
<svg class="a" style="left:427px;top:634px" width="6" height="4" viewBox="0 0 6 4"><path d="M0 0h6L3 4z" fill="#3b78c3"/></svg>
<div class="a" style="left:220px;top:661px;width:23px;height:23px;background:#9fd5b3;border:1px solid #5fa77a"></div>
<div class="t" style="left:226px;top:665px;font-size:14px;font-weight:bold;color:#333">B</div>
<div class="t" style="left:251px;top:665px;font-size:14px;font-style:italic;color:#333;font-family:'Liberation Serif',serif">I</div>
<div class="t" style="left:273px;top:665px;font-size:13px;color:#333;text-decoration:underline">U</div>
<svg class="a" style="left:292px;top:670px" width="7" height="5" viewBox="0 0 7 5"><path d="M0.5 0.5l3 3 3-3" fill="none" stroke="#333" stroke-width="1.1"/></svg>
<div class="a sep" style="left:309px;top:663px;height:20px"></div>
<svg class="a" style="left:318px;top:664px" width="14" height="14" viewBox="0 0 14 14"><path d="M0.5 0.5h13v13h-13zM7 0.5v13M0.5 7h13" fill="none" stroke="#999" stroke-width="1" stroke-dasharray="1 1"/><path d="M0.5 13.5h13" stroke="#555" stroke-width="1"/></svg>
<svg class="a" style="left:338px;top:670px" width="7" height="5" viewBox="0 0 7 5"><path d="M0.5 0.5l3 3 3-3" fill="none" stroke="#333" stroke-width="1.1"/></svg>
<div class="a sep" style="left:355px;top:663px;height:20px"></div>
<svg class="a" style="left:362px;top:663px" width="18" height="19" viewBox="0 0 18 19"><path d="M3 8l5-5 5 5-5 5z" fill="#fff" stroke="#555" stroke-width="1"/><path d="M13 8c2 1 2.5 3 1.5 4" fill="none" stroke="#3b78c3" stroke-width="1.5"/><rect x="1" y="15" width="16" height="3.5" fill="#ffff00"/></svg>
<svg class="a" style="left:385px;top:670px" width="7" height="5" viewBox="0 0 7 5"><path d="M0.5 0.5l3 3 3-3" fill="none" stroke="#333" stroke-width="1.1"/></svg>
<div class="t" style="left:403px;top:663px;font-size:15px;color:#444">A</div>
<div class="a" style="left:402px;top:677px;width:16px;height:4px;background:#f00"></div>
<svg class="a" style="left:424px;top:670px" width="7" height="5" viewBox="0 0 7 5"><path d="M0.5 0.5l3 3 3-3" fill="none" stroke="#333" stroke-width="1.1"/></svg>
<div class="t rb" style="left:307.5px;top:696px;letter-spacing:-0.28px">Font</div>
<svg class="a" style="left:431px;top:698px" width="9" height="9" viewBox="0 0 9 9"><path d="M0.5 4V0.5h8v8H5" fill="none" stroke="#666" stroke-width="0.9"/><path d="M2 2l5 5M7 3.5V7H3.5" fill="none" stroke="#666" stroke-width="0.9"/></svg>
<div class="a sep" style="left:444px;top:623px;height:85px"></div>
<!-- alignment -->
<svg class="a" style="left:455px;top:630px" width="16" height="12" viewBox="0 0 16 12"><path d="M0 1h15M2 4h11M0 7h15" stroke="#555" stroke-width="1"/></svg>
<div class="a" style="left:476px;top:630px;width:22px;height:23px;background:#9fd5b3;border:1px solid #5fa77a"></div>
<svg class="a" style="left:479px;top:636px" width="16" height="12" viewBox="0 0 16 12"><path d="M0 1h15M2 4.5h11M0 8h15" stroke="#444" stroke-width="1"/></svg>
<svg class="a" style="left:503px;top:640px" width="16" height="12" viewBox="0 0 16 12"><path d="M0 3h15M2 6.5h11M0 10h15" stroke="#555" stroke-width="1"/></svg>
<div class="a sep" style="left:526px;top:630px;height:20px"></div>
<svg class="a" style="left:533px;top:631px" width="17" height="17" viewBox="0 0 17 17"><text x="0" y="11" font-size="9" font-family="Liberation Sans" fill="#555" transform="rotate(-40 6 8)">ab</text><path d="M5 15l10-9M12 6h3v3" fill="none" stroke="#555" stroke-width="1"/></svg>
<svg class="a" style="left:553px;top:638px" width="7" height="5" viewBox="0 0 7 5"><path d="M0.5 0.5l3 3 3-3" fill="none" stroke="#333" stroke-width="1.1"/></svg>
<div class="a sep" style="left:581px;top:629px;height:55px"></div>
<svg class="a" style="left:590px;top:631px" width="15" height="17" viewBox="0 0 15 17"><text x="0" y="8" font-size="9" font-family="Liberation Sans" fill="#444">ab</text><text x="0" y="16" font-size="9" font-family="Liberation Sans" fill="#444">c</text><path d="M13 10v3H7M9 11l-2 2 2 2" fill="none" stroke="#3b78c3" stroke-width="1"/></svg>
<div class="t rb" style="left:608px;top:635px;letter-spacing:-0.1px">Wrap Text</div>
<svg class="a" style="left:455px;top:666px" width="16" height="12" viewBox="0 0 16 12"><path d="M0 1h15M0 4h10M0 7h15M0 10h10" stroke="#555" stroke-width="1"/></svg>
<div class="a" style="left:476px;top:661px;width:22px;height:23px;background:#9fd5b3;border:1px solid #5fa77a"></div>
<svg class="a" style="left:479px;top:666px" width="16" height="12" viewBox="0 0 16 12"><path d="M0 1h15M2.5 4h10M0 7h15M2.5 10h10" stroke="#444" stroke-width="1"/></svg>
<svg class="a" style="left:503px;top:666px" width="16" height="12" viewBox="0 0 16 12"><path d="M0 1h15M5 4h10M0 7h15M5 10h10" stroke="#555" stroke-width="1"/></svg>
<div class="a sep" style="left:526px;top:663px;height:20px"></div>
<svg class="a" style="left:534px;top:664px" width="16" height="14" viewBox="0 0 16 14"><path d="M6 1h9M6 4.5h9M6 8h9M0 12.5h15" stroke="#555" stroke-width="1"/><path d="M5 6H1M3 4L1 6l2 2" fill="none" stroke="#3b78c3" stroke-width="1.2"/></svg>
<svg class="a" style="left:558px;top:664px" width="16" height="14" viewBox="0 0 16 14"><path d="M6 1h9M6 4.5h9M6 8h9M0 12.5h15" stroke="#555" stroke-width="1"/><path d="M0 6h4M2.5 4l2 2-2 2" fill="none" stroke="#3b78c3" stroke-width="1.2"/></svg>

<svg class="a" style="left:589px;top:663px" width="16" height="19" viewBox="0 0 16 19"><rect x="0.5" y="0.5" width="15" height="18" fill="#fff" stroke="#555" stroke-width="1"/><path d="M0.5 6h15M0.5 13h15M8 0.5v5.5M8 13v5.5" stroke="#555" stroke-width="1"/><path d="M3 9.5h10M5 8l-2 1.5L5 11M11 8l2 1.5L11 11" fill="none" stroke="#3b78c3" stroke-width="1"/></svg>
<div class="t rb" style="left:608.5px;top:666px;letter-spacing:0.11px">Merge &amp; Center</div>
<svg class="a" style="left:707px;top:670px" width="7" height="5" viewBox="0 0 7 5"><path d="M0.5 0.5l3 3 3-3" fill="none" stroke="#333" stroke-width="1.1"/></svg>
<div class="t rb" style="left:553px;top:696px">Alignment</div>
<svg class="a" style="left:719px;top:698px" width="9" height="9" viewBox="0 0 9 9"><path d="M0.5 4V0.5h8v8H5" fill="none" stroke="#666" stroke-width="0.9"/><path d="M2 2l5 5M7 3.5V7H3.5" fill="none" stroke="#666" stroke-width="0.9"/></svg>
<div class="a sep" style="left:731px;top:623px;height:85px"></div>
<!-- number -->
<div class="a" style="left:740px;top:630px;width:140px;height:23px;border:1px solid #ababab;background:#fff"></div>
<div class="t" style="left:743px;top:636px;font-size:12.5px;color:#262626;letter-spacing:-0.67px">General</div>
<svg class="a" style="left:868px;top:639px" width="7" height="5" viewBox="0 0 7 5"><path d="M0 0h7L3.5 4z" fill="#444"/></svg>
<div class="t" style="left:746px;top:664px;font-size:15px;color:#444">$</div>
<svg class="a" style="left:765px;top:670px" width="7" height="5" viewBox="0 0 7 5"><path d="M0.5 0.5l3 3 3-3" fill="none" stroke="#333" stroke-width="1.1"/></svg>
<div class="t" style="left:783px;top:664px;font-size:14.5px;color:#444">%</div>
<div class="t" style="left:810px;top:660px;font-size:14px;font-weight:bold;color:#444">,</div>
<div class="a sep" style="left:830px;top:663px;height:20px"></div>
<svg class="a" style="left:836px;top:664px" width="16" height="15" viewBox="0 0 16 15"><text x="6" y="6" font-size="7" font-family="Liberation Sans" fill="#444">.0</text><text x="3" y="14" font-size="7" font-family="Liberation Sans" fill="#444">.00</text><path d="M6 3H1M3 1L1 3l2 2" fill="none" stroke="#3b78c3" stroke-width="1"/></svg>
<svg class="a" style="left:860px;top:664px" width="16" height="15" viewBox="0 0 16 15"><text x="4" y="6" font-size="7" font-family="Liberation Sans" fill="#444">.00</text><text x="8" y="14" font-size="7" font-family="Liberation Sans" fill="#444">.0</text><path d="M1 11h6M5 9l2 2-2 2" fill="none" stroke="#3b78c3" stroke-width="1"/></svg>
<div class="t rb" style="left:781px;top:696px;letter-spacing:-0.33px">Number</div>
<svg class="a" style="left:875px;top:698px" width="9" height="9" viewBox="0 0 9 9"><path d="M0.5 4V0.5h8v8H5" fill="none" stroke="#666" stroke-width="0.9"/><path d="M2 2l5 5M7 3.5V7H3.5" fill="none" stroke="#666" stroke-width="0.9"/></svg>
<div class="a sep" style="left:887px;top:623px;height:85px"></div>
<!-- styles -->
<svg class="a" style="left:918px;top:626px" width="32" height="31" viewBox="0 0 32 31"><path d="M0.5 0.5h28v24h-28zM0.5 6.5h28M0.5 12.5h28M0.5 18.5h28M7.5 0.5v24M14.5 0.5v24M21.5 0.5v24" fill="#fff" stroke="#999" stroke-width="1"/><rect x="8" y="1" width="6" height="5" fill="#e46c42"/><rect x="8" y="7" width="12" height="5" fill="#3b78c3"/><rect x="8" y="13" width="6" height="5" fill="#e46c42"/><rect x="15" y="17" width="16" height="13" fill="#fff" stroke="#555" stroke-width="1"/><path d="M19 21.5h8M19 25h8M25 19l-4 9" stroke="#333" stroke-width="1"/></svg>
<div class="t rb" style="left:902px;top:661px;letter-spacing:0.13px">Conditional</div>
<div class="t rb" style="left:898px;top:677px;letter-spacing:0.13px">Formatting</div>
<svg class="a" style="left:961px;top:683px" width="7" height="5" viewBox="0 0 7 5"><path d="M0.5 0.5l3 3 3-3" fill="none" stroke="#333" stroke-width="1.1"/></svg>
<svg class="a" style="left:986px;top:628px" width="30" height="30" viewBox="0 0 30 30"><path d="M0.5 0.5h24v18h-24zM0.5 6.5h24M0.5 12.5h24M8.5 0.5v18M16.5 0.5v18" fill="#c5daf1" stroke="#999" stroke-width="1"/><path d="M28 5L18 19" stroke="#666" stroke-width="4"/><path d="M13 21c2-3 5-3 6-1s-2 6-7 7" fill="#3b78c3"/></svg>
<div class="t rb" style="left:973.3px;top:661px;letter-spacing:-0.29px">Format as</div>
<div class="t rb" style="left:980px;top:677px;letter-spacing:-0.3px">Table</div>
<svg class="a" style="left:1010px;top:683px" width="7" height="5" viewBox="0 0 7 5"><path d="M0.5 0.5l3 3 3-3" fill="none" stroke="#333" stroke-width="1.1"/></svg>
<div class="a" style="left:1029px;top:625px;width:345px;height:62px;border:1px solid #d5d5d5;border-right:none"></div>
<div class="a" style="left:1031px;top:628px;width:106px;height:27px;border:2px solid #86c5a0;background:#fff"></div>
<div class="t" style="left:1038.6px;top:635px;font-size:13.5px;color:#222;letter-spacing:0.16px">Normal</div>
<div class="a" style="left:1141px;top:631px;width:100px;height:22px;background:#ffc7ce"></div>
<div class="t" style="left:1144px;top:635px;font-size:13.5px;color:#9c0006;letter-spacing:-0.64px">Bad</div>
<div class="a" style="left:1246px;top:631px;width:100px;height:22px;background:#c6efce"></div>
<div class="t" style="left:1250.6px;top:635px;font-size:13.5px;color:#006100;letter-spacing:-0.33px">Good</div>
<div class="a" style="left:1034px;top:659px;width:101px;height:22px;background:#ffeb9c"></div>
<div class="t" style="left:1038.6px;top:663px;font-size:13.5px;color:#9c5700;letter-spacing:0.32px">Neutral</div>
<div class="a" style="left:1141px;top:659px;width:100px;height:22px;background:#f2f2f2;border:1px solid #7f7f7f"></div>
<div class="t" style="left:1144px;top:663px;font-size:13.5px;font-weight:bold;color:#fa7d00;letter-spacing:-0.46px">Calculation</div>
<div class="a" style="left:1246px;top:659px;width:100px;height:22px;background:#a5a5a5;border:3px double #3f3f3f"></div>
<div class="t" style="left:1250.6px;top:663px;font-size:13.5px;font-weight:bold;color:#fff;letter-spacing:-0.63px">Check Cell</div>
<div class="a" style="left:1350px;top:625px;width:24px;height:62px;border:1px solid #c6c6c6;background:#fff"></div>
<svg class="a" style="left:1357px;top:650px" width="9" height="10" viewBox="0 0 9 10"><path d="M1 1h7" stroke="#444" stroke-width="1"/><path d="M1 4h7L4.5 8z" fill="#444"/></svg>
<div class="t rb" style="left:1121.6px;top:696px;letter-spacing:-0.71px">Styles</div>
<div class="a sep" style="left:1384px;top:623px;height:85px"></div>
<!-- cells -->
<svg class="a" style="left:1395px;top:624px" width="120" height="34" viewBox="1395 624 120 34"><g fill="none" stroke="#6d6d6d" stroke-width="1"><rect x="1401.5" y="627.5" width="14" height="5"/><path d="M1408.5 627.5v5"/><rect x="1401.5" y="643.5" width="14" height="10"/><path d="M1408.5 643.5v10M1401.5 648.5h14"/></g><rect x="1412.5" y="635.5" width="14" height="5" fill="#c5d9f1" stroke="#6d6d6d" stroke-width="1"/><path d="M1419.5 635.5v5" stroke="#6d6d6d" stroke-width="1"/><path d="M1409 638h-5.5M1405.5 635.6L1403 638l2.5 2.4" fill="none" stroke="#3f7fc4" stroke-width="1.5"/>
<g fill="none" stroke="#6d6d6d" stroke-width="1"><rect x="1442.5" y="627.5" width="14" height="5"/><path d="M1449.5 627.5v5"/><path d="M1456.5 644.5h-14v10h14v-10M1449.5 644.5v10M1442.5 649.5h14"/></g><path d="M1448.5 635.5h9l3 2.5-3 2.5h-9z" fill="#c5d9f1" stroke="#6d6d6d" stroke-width="1"/><path d="M1455.5 635.5v5" stroke="#6d6d6d" stroke-width="1"/><path d="M1457.5 633l13.5 12.5M1471 633.5l-13.8 12" stroke="#d9582f" stroke-width="1.8"/>
<path d="M1484.5 626.3v4.4M1507 626.3v4.4M1485.5 628.5h20.5M1488 626.3l-2.3 2.2 2.3 2.2M1503.5 626.3l2.3 2.2-2.3 2.2" fill="none" stroke="#3f7fc4" stroke-width="1"/><rect x="1484.5" y="632.5" width="27" height="20" fill="#fff" stroke="#7a7a7a" stroke-width="1"/><path d="M1491.9 632.5v20M1499.6 632.5v20M1506.6 632.5v20M1484.5 637.3h27M1484.5 647.2h27" stroke="#b9b9b9" stroke-width="1"/><rect x="1492" y="638" width="7" height="9" fill="#3f7fc4"/><path d="M1484.5 652.5v3.5h6l2-3.5M1493 652.5v3.5h7l2-3.5" fill="none" stroke="#7a7a7a" stroke-width="1"/></svg>
<div class="t rb" style="left:1398.6px;top:661px;letter-spacing:-0.14px">Insert</div>
<svg class="a" style="left:1410px;top:681px" width="7" height="5" viewBox="0 0 7 5"><path d="M0.5 0.5l3 3 3-3" fill="none" stroke="#333" stroke-width="1.1"/></svg>

<div class="t rb" style="left:1439.2px;top:661px;letter-spacing:-0.31px">Delete</div>
<svg class="a" style="left:1452px;top:681px" width="7" height="5" viewBox="0 0 7 5"><path d="M0.5 0.5l3 3 3-3" fill="none" stroke="#333" stroke-width="1.1"/></svg>

<div class="t rb" style="left:1479px;top:661px;letter-spacing:-0.12px">Format</div>
<svg class="a" style="left:1494px;top:681px" width="7" height="5" viewBox="0 0 7 5"><path d="M0.5 0.5l3 3 3-3" fill="none" stroke="#333" stroke-width="1.1"/></svg>
<div class="t rb" style="left:1444.4px;top:696px;letter-spacing:-0.69px">Cells</div>
<div class="a sep" style="left:1527px;top:623px;height:85px"></div>
<!-- editing -->
<svg class="a" style="left:1538px;top:623px" width="18" height="19" viewBox="1538 623 18 19"><path d="M1554.2 625.8H1540.6l6.6 7.4-6.6 7.3h13.6" fill="none" stroke="#444" stroke-width="2.1" stroke-linejoin="miter"/></svg>
<div class="t rb" style="left:1558px;top:627px">AutoSum</div>
<svg class="a" style="left:1622px;top:631px" width="7" height="5" viewBox="0 0 7 5"><path d="M0.5 0.5l3 3 3-3" fill="none" stroke="#333" stroke-width="1.1"/></svg>
<svg class="a" style="left:1540px;top:649px" width="14" height="15" viewBox="0 0 14 15"><rect x="0.5" y="0.5" width="13" height="14" fill="#fff" stroke="#666" stroke-width="1"/><rect x="0.5" y="0.5" width="13" height="3" fill="#777"/><path d="M7 5v7M4 9l3 3 3-3" fill="none" stroke="#3b78c3" stroke-width="1.5"/></svg>
<div class="t rb" style="left:1558px;top:650px">Fill</div>
<svg class="a" style="left:1576px;top:655px" width="7" height="5" viewBox="0 0 7 5"><path d="M0.5 0.5l3 3 3-3" fill="none" stroke="#333" stroke-width="1.1"/></svg>
<svg class="a" style="left:1538px;top:670px" width="18" height="16" viewBox="1538 670 18 16"><path d="M1547.6 672.2l5.2 4.3-6.8 7.3-5.4-4.3z" fill="#e8808f"/><path d="M1542.3 677.6l5.4 4.3" stroke="#fff" stroke-width="1.2"/></svg>
<div class="t rb" style="left:1558px;top:673px;letter-spacing:-0.56px">Clear</div>
<svg class="a" style="left:1588px;top:678px" width="7" height="5" viewBox="0 0 7 5"><path d="M0.5 0.5l3 3 3-3" fill="none" stroke="#333" stroke-width="1.1"/></svg>
<svg class="a" style="left:1643px;top:626px" width="33" height="30" viewBox="1643 626 33 30"><text x="1644.6" y="640" font-family="Liberation Sans" font-weight="bold" font-size="14.5" fill="#3f7fc4">A</text><text x="1645.2" y="653.6" font-family="Liberation Sans" font-weight="bold" font-size="14" fill="#9b59c9">Z</text><path d="M1657.2 635.3h16.8l-6.2 6.6v8.4h-2.8v-8.4z" fill="#7a7a7a"/><path d="M1665.8 642.5v7" stroke="#fff" stroke-width="1"/></svg>
<div class="t rb" style="left:1643.0px;top:661px;letter-spacing:0.11px">Sort &amp;</div>
<div class="t rb" style="left:1641.1px;top:677px;letter-spacing:-0.31px">Filter</div>
<svg class="a" style="left:1669px;top:683px" width="7" height="5" viewBox="0 0 7 5"><path d="M0.5 0.5l3 3 3-3" fill="none" stroke="#333" stroke-width="1.1"/></svg>
<svg class="a" style="left:1688px;top:625px" width="30" height="31" viewBox="1688 625 30 31"><circle cx="1706.5" cy="636.8" r="7.8" fill="none" stroke="#3f7fc4" stroke-width="2.1"/><path d="M1700.5 643L1691.6 652.2" stroke="#3f7fc4" stroke-width="3.2" stroke-linecap="round"/></svg>
<div class="t rb" style="left:1686px;top:661px">Find &amp;</div>
<div class="t rb" style="left:1683px;top:677px;letter-spacing:-0.51px">Select</div>
<svg class="a" style="left:1716px;top:683px" width="7" height="5" viewBox="0 0 7 5"><path d="M0.5 0.5l3 3 3-3" fill="none" stroke="#333" stroke-width="1.1"/></svg>
<div class="t rb" style="left:1613.4px;top:696px">Editing</div>
<div class="a sep" style="left:1735px;top:623px;height:85px"></div>
<div class="a" style="left:1761px;top:635px;width:10px;height:10px;border-radius:5px;background:#ff8c00;box-shadow:0 0 3px #ffb060"></div>
<div class="t rb" style="left:1746px;top:661px;letter-spacing:0.14px">Add-ins</div>
<div class="t rb" style="left:1746px;top:696px;letter-spacing:0.14px">Add-ins</div>
<div class="a sep" style="left:1798px;top:623px;height:85px"></div>
<svg class="a" style="left:1837px;top:701px" width="10" height="6" viewBox="0 0 10 6"><path d="M1 5l4-4 4 4" fill="none" stroke="#444" stroke-width="1.2"/></svg>

<!-- formula bar -->
<div class="a" style="left:52px;top:722px;width:102px;height:26px;border:1px solid #c6c6c6;background:#fdfdfd"></div>
<div class="t" style="left:59px;top:729px;font-size:13px;color:#333">A1</div>
<svg class="a" style="left:139px;top:732px" width="8" height="5" viewBox="0 0 8 5"><path d="M0 0h8L4 4.5z" fill="#555"/></svg>
<svg class="a" style="left:167px;top:729px" width="4" height="13" viewBox="0 0 4 13"><circle cx="2" cy="2" r="1" fill="#777"/><circle cx="2" cy="6.5" r="1" fill="#777"/><circle cx="2" cy="11" r="1" fill="#777"/></svg>
<div class="a" style="left:184px;top:722px;width:110px;height:26px;border:1px solid #c6c6c6;background:#fdfdfd"></div>
<svg class="a" style="left:197px;top:729px" width="12" height="12" viewBox="0 0 12 12"><path d="M1 1l10 10M11 1L1 11" stroke="#aaa" stroke-width="1.2"/></svg>
<svg class="a" style="left:232px;top:729px" width="14" height="12" viewBox="0 0 14 12"><path d="M1 6l4 5 8-10" fill="none" stroke="#bbb" stroke-width="1.6"/></svg>
<div class="t" style="left:268px;top:727px;font-size:13px;color:#444;font-style:italic;font-family:'Liberation Serif',serif">f<span style="font-size:10px">x</span></div>
<div class="a" style="left:297px;top:722px;width:1558px;height:86px;border:1px solid #c6c6c6;border-right:none;background:#fcfcfc"></div>
<div class="t" style="left:309px;top:729px;font-size:13px;color:#333;letter-spacing:0.26px">Booking Date</div>
<svg class="a" style="left:1837px;top:731px" width="10" height="6" viewBox="0 0 10 6"><path d="M1 5l4-4 4 4" fill="none" stroke="#555" stroke-width="1.2"/></svg>
<div class="a" style="left:47px;top:818px;width:1791px;height:109px;background:#fff"></div>
<div class="a" style="left:72px;top:818px;width:144px;height:19px;background:#e1e1e1"></div>
<div class="a" style="left:47px;top:838px;width:25px;height:19px;background:#e1e1e1"></div>
<svg class="a" style="left:57px;top:823px" width="12" height="12" viewBox="0 0 12 12"><path d="M11 0v11H0z" fill="#e1e1e1"/></svg>
<div class="a" style="left:47px;top:837px;width:1787px;height:1px;background:#a0a0a0"></div>
<div class="a" style="left:47px;top:857px;width:1787px;height:1px;background:#d4d4d4"></div>
<div class="a" style="left:47px;top:877px;width:1787px;height:1px;background:#d4d4d4"></div>
<div class="a" style="left:47px;top:897px;width:1787px;height:1px;background:#d4d4d4"></div>
<div class="a" style="left:47px;top:917px;width:1787px;height:1px;background:#d4d4d4"></div>
<div class="a" style="left:47px;top:857px;width:1787px;height:1px;background:#9a9a9a"></div>
<div class="a" style="left:72px;top:818px;width:1px;height:109px;background:#d4d4d4"></div>
<div class="a" style="left:216px;top:818px;width:1px;height:109px;background:#d4d4d4"></div>
<div class="a" style="left:277px;top:818px;width:1px;height:109px;background:#d4d4d4"></div>
<div class="a" style="left:422px;top:818px;width:1px;height:109px;background:#d4d4d4"></div>
<div class="a" style="left:559px;top:818px;width:1px;height:109px;background:#d4d4d4"></div>
<div class="a" style="left:688px;top:818px;width:1px;height:109px;background:#d4d4d4"></div>
<div class="a" style="left:929px;top:818px;width:1px;height:109px;background:#d4d4d4"></div>
<div class="a" style="left:1060px;top:818px;width:1px;height:109px;background:#d4d4d4"></div>
<div class="a" style="left:1185px;top:818px;width:1px;height:109px;background:#d4d4d4"></div>
<div class="a" style="left:1265px;top:818px;width:1px;height:109px;background:#d4d4d4"></div>
<div class="a" style="left:1463px;top:818px;width:1px;height:109px;background:#d4d4d4"></div>
<div class="a" style="left:1559px;top:818px;width:1px;height:109px;background:#d4d4d4"></div>
<div class="a" style="left:1701px;top:818px;width:1px;height:109px;background:#d4d4d4"></div>
<div class="a" style="left:1760px;top:818px;width:1px;height:109px;background:#d4d4d4"></div>
<div class="a" style="left:1834px;top:818px;width:1px;height:109px;background:#d4d4d4"></div>
<div class="a" style="left:72px;top:818px;width:1px;height:109px;background:#c8c8c8"></div>
<div class="t" style="left:72px;width:144px;top:822px;text-align:center;font-size:12.5px;color:#217346">A</div>
<div class="t" style="left:216px;width:61px;top:822px;text-align:center;font-size:12.5px;color:#444">B</div>
<div class="t" style="left:277px;width:145px;top:822px;text-align:center;font-size:12.5px;color:#444">C</div>
<div class="t" style="left:422px;width:137px;top:822px;text-align:center;font-size:12.5px;color:#444">D</div>
<div class="t" style="left:559px;width:129px;top:822px;text-align:center;font-size:12.5px;color:#444">E</div>
<div class="t" style="left:688px;width:241px;top:822px;text-align:center;font-size:12.5px;color:#444">F</div>
<div class="t" style="left:929px;width:131px;top:822px;text-align:center;font-size:12.5px;color:#444">G</div>
<div class="t" style="left:1060px;width:125px;top:822px;text-align:center;font-size:12.5px;color:#444">H</div>
<div class="t" style="left:1185px;width:80px;top:822px;text-align:center;font-size:12.5px;color:#444">I</div>
<div class="t" style="left:1265px;width:198px;top:822px;text-align:center;font-size:12.5px;color:#444">J</div>
<div class="t" style="left:1463px;width:96px;top:822px;text-align:center;font-size:12.5px;color:#444">K</div>
<div class="t" style="left:1559px;width:142px;top:822px;text-align:center;font-size:12.5px;color:#444">L</div>
<div class="t" style="left:1701px;width:59px;top:822px;text-align:center;font-size:12.5px;color:#444">M</div>
<div class="t" style="left:1760px;width:126px;top:822px;text-align:center;font-size:12.5px;color:#444">N</div>
<div class="a" style="left:72px;top:836px;width:144px;height:1px;background:#217346"></div>
<div class="t" style="left:47px;width:25px;top:842px;text-align:center;font-size:12.5px;color:#217346">1</div>
<div class="t" style="left:47px;width:25px;top:862px;text-align:center;font-size:12.5px;color:#444">2</div>
<div class="t" style="left:47px;width:25px;top:882px;text-align:center;font-size:12.5px;color:#444">3</div>
<div class="t" style="left:47px;width:25px;top:902px;text-align:center;font-size:12.5px;color:#444">4</div>
<div class="t" style="left:47px;width:25px;top:922px;text-align:center;font-size:12.5px;color:#444">5</div>
<div class="a" style="left:47px;top:818px;width:1791px;height:109px;overflow:hidden">
<div class="xh" style="left:25px;width:144px;top:23px">Booking Date</div>
<div class="xc" style="left:25px;width:144px;top:44px;letter-spacing:-0.13px">2025-05-28 14:29:56</div>
<div class="xc" style="left:25px;width:144px;top:64px;letter-spacing:-0.13px">2025-05-27 19:57:36</div>
<div class="xc" style="left:25px;width:144px;top:84px;letter-spacing:-0.13px">2025-05-26 14:11:29</div>
<div class="xh" style="left:169px;width:61px;top:23px">Station</div>
<div class="xc" style="left:169px;width:61px;top:44px;letter-spacing:-0.6px">B2C</div>
<div class="xc" style="left:169px;width:61px;top:64px;letter-spacing:-0.6px">B2C</div>
<div class="xc" style="left:169px;width:61px;top:84px;letter-spacing:-0.6px">B2C</div>
<div class="xh" style="left:230px;width:145px;top:23px">Booking Item Code</div>
<div class="xc" style="left:230px;width:145px;top:44px;letter-spacing:-0.13px">K25052811297H01</div>
<div class="xc" style="left:230px;width:145px;top:64px;letter-spacing:-0.13px">K25052711966H01</div>
<div class="xc" style="left:230px;width:145px;top:84px;letter-spacing:-0.13px">K25052611132H01</div>
<div class="xh" style="left:375px;width:137px;top:23px">Device Type Code</div>
<div class="xc" style="left:375px;width:137px;top:44px;letter-spacing:-0.6px">PC</div>
<div class="xc" style="left:375px;width:137px;top:64px;letter-spacing:-0.6px">PC</div>
<div class="xc" style="left:375px;width:137px;top:84px;letter-spacing:-0.6px">PC</div>
<div class="xh" style="left:512px;width:129px;top:23px">Booking Status</div>
<div class="xc" style="left:512px;width:129px;top:44px;letter-spacing:0.38px">Confirmed</div>
<div class="xc" style="left:512px;width:129px;top:64px;letter-spacing:0.38px">Cancelled</div>
<div class="xc" style="left:512px;width:129px;top:84px;letter-spacing:0.38px">Cancelled(Replied)</div>
<div class="xh" style="left:641px;width:241px;top:23px">Hotel Name</div>
<div class="xc" style="left:641px;width:241px;top:44px;letter-spacing:0.38px">Hotel Il Fiore Kasai Annex</div>
<div class="xc" style="left:641px;width:241px;top:64px;letter-spacing:0.38px">Hotel Monterey Fukuoka</div>
<div class="xc" style="left:641px;width:241px;top:84px;letter-spacing:0.38px">Sotetsu Fresa Inn Ginza Nanachome</div>
<div class="xh" style="left:882px;width:131px;top:23px">Client Cancel D/L</div>
<div class="xc" style="left:882px;width:131px;top:44px;letter-spacing:-0.13px">2025-05-28 17:00</div>
<div class="xc" style="left:882px;width:131px;top:64px;letter-spacing:-0.13px">2025-06-07 17:00</div>
<div class="xc" style="left:882px;width:131px;top:84px;letter-spacing:-0.13px">2025-08-24 17:00</div>
<div class="xh" style="left:1013px;width:125px;top:23px">C/ in Date</div>
<div class="xc" style="left:1013px;width:125px;top:44px;letter-spacing:-0.13px">2025-06-01</div>
<div class="xc" style="left:1013px;width:125px;top:64px;letter-spacing:-0.13px">2025-06-16</div>
<div class="xc" style="left:1013px;width:125px;top:84px;letter-spacing:-0.13px">2025-08-27</div>
<div class="xh" style="left:1138px;width:80px;top:23px">Nts Count</div>
<div class="xc" style="left:1138px;width:80px;top:44px;letter-spacing:-0.13px">2</div>
<div class="xc" style="left:1138px;width:80px;top:64px;letter-spacing:-0.13px">2</div>
<div class="xc" style="left:1138px;width:80px;top:84px;letter-spacing:-0.13px">4</div>
<div class="xh" style="left:1218px;width:198px;top:23px">Room Type</div>
<div class="xc" style="left:1218px;width:198px;top:44px;letter-spacing:0.38px">Standard Twin Non Smoking</div>
<div class="xc" style="left:1218px;width:198px;top:64px;letter-spacing:0.38px">Superior Twin (Non Smoking)</div>
<div class="xc" style="left:1218px;width:198px;top:84px;letter-spacing:0.38px">Comfort Double Non Smoking</div>
<div class="xh" style="left:1416px;width:96px;top:23px">Room Count</div>
<div class="xc" style="left:1416px;width:96px;top:44px;letter-spacing:-0.13px">1</div>
<div class="xc" style="left:1416px;width:96px;top:64px;letter-spacing:-0.13px">1</div>
<div class="xc" style="left:1416px;width:96px;top:84px;letter-spacing:-0.13px">1</div>
<div class="xh" style="left:1512px;width:142px;top:23px">1st Traveler Name</div>
<svg class="a" style="left:1562px;top:42px" width="42.9" height="14" viewBox="0 0 43.2 14" preserveAspectRatio="none"><g fill="none" stroke="#000" stroke-width="1.15"><path transform="translate(0.0 0)" d="M1.4 1V6.2M6.4 1V6.2M1.4 3.6H6.4M1.4 6.2H6.4M10.5 0.2V7.5M10.5 3.3H12.8M2 9.5H10.5V13.8"/><path transform="translate(14.6 0)" d="M1 1.3H8.3M4.6 1.5L0.7 7.5M4.6 3.6L8 7.5M12 0.2V8.6M7.8 4.5H12M3.60 11.50a4.2 2.1 0 1 0 8.40 0a4.2 2.1 0 1 0 -8.40 0"/><path transform="translate(29.2 0)" d="M3.60 3.90a3.9 2.6 0 1 0 7.80 0a3.9 2.6 0 1 0 -7.80 0M1.1 8.4H13.7M5.8 8.4V11.7M9.5 8.4V11.7M3.3 9.9V13.6H12.1"/></g></svg>
<svg class="a" style="left:1562px;top:62px" width="42.9" height="14" viewBox="0 0 43.2 14" preserveAspectRatio="none"><g fill="none" stroke="#000" stroke-width="1.15"><path transform="translate(0.0 0)" d="M1.4 1V6.2M6.4 1V6.2M1.4 3.6H6.4M1.4 6.2H6.4M10.5 0.2V7.5M10.5 3.3H12.8M2 9.5H10.5V13.8"/><path transform="translate(14.6 0)" d="M3.8 1L0.6 10.7M3.8 5.9L7.3 10.7M6.7 5.5H9.3M9.3 0.2V13.9M12.1 0.2V13.9"/><path transform="translate(29.2 0)" d="M1.8 1V9.5H9M11 0.2V13.9M11 6.5H14"/></g></svg>
<svg class="a" style="left:1562px;top:82px" width="42.9" height="14" viewBox="0 0 43.2 14" preserveAspectRatio="none"><g fill="none" stroke="#000" stroke-width="1.15"><path transform="translate(0.0 0)" d="M1.8 1V9.5H9M11 0.2V13.9M11 6.5H14"/><path transform="translate(14.6 0)" d="M1.2 1.4H8.5M4.6 1.4L0.8 10.6M4.6 6L9.3 10.6M11.7 0.1V13.6"/><path transform="translate(29.2 0)" d="M2.50 3.40a3.4 2.2 0 1 0 6.80 0a3.4 2.2 0 1 0 -6.80 0M1.3 7.4H9.2M5.5 7.4V10.8M9.2 10.6H12.4M12.4 0.1V11.2M3.7 10V13.4H13"/></g></svg>
<div class="xh" style="left:1654px;width:59px;top:23px">B. Curr</div>
<div class="xc" style="left:1654px;width:59px;top:44px;letter-spacing:-0.6px">KRW</div>
<div class="xc" style="left:1654px;width:59px;top:64px;letter-spacing:-0.6px">KRW</div>
<div class="xc" style="left:1654px;width:59px;top:84px;letter-spacing:-0.6px">KRW</div>
<div class="a" style="left:1713px;top:0;width:74.5px;height:109px;overflow:hidden"><div class="xh" style="left:0;width:101px;top:23px">Billing Sum</div></div>
<div class="a" style="left:1713px;top:0;width:74.5px;height:109px;overflow:hidden"><div class="xc" style="left:0;width:125px;top:44px;text-align:center;letter-spacing:-0.13px">269,631</div></div>
<div class="a" style="left:1713px;top:0;width:74.5px;height:109px;overflow:hidden"><div class="xc" style="left:0;width:125px;top:64px;text-align:center;letter-spacing:-0.13px">0</div></div>
<div class="a" style="left:1713px;top:0;width:74.5px;height:109px;overflow:hidden"><div class="xc" style="left:0;width:125px;top:84px;text-align:center;letter-spacing:-0.13px">0</div></div>
</div>
<div class="a" style="left:216px;top:818px;width:1px;height:109px;background:#9c9c9c"></div>
<div class="a" style="left:1834px;top:838px;width:1px;height:89px;background:#bcbcbc"></div>
<div class="a" style="left:71px;top:836px;width:147px;height:23px;border:2px solid #217346"></div>
<div class="a" style="left:214px;top:855px;width:5px;height:5px;background:#217346;border:1px solid #fff"></div>
<div class="a" style="left:1834px;top:818px;width:21px;height:109px;background:#fff"></div>
<div class="a" style="left:1838px;top:820px;width:14px;height:15px;border:1px solid #aaa;background:#fff"></div>
<svg class="a" style="left:1841px;top:825px" width="8" height="5" viewBox="0 0 8 5"><path d="M0 5h8L4 0z" fill="#222"/></svg>
<div class="a" style="left:1838px;top:836px;width:14px;height:16px;border:1px solid #aaa;background:#fff"></div>
<div class="a" style="left:1838px;top:852px;width:14px;height:60px;background:#f0f0f0"></div>
<div class="a" style="left:1838px;top:912px;width:14px;height:15px;border:1px solid #aaa;background:#fff"></div>
<svg class="a" style="left:1841px;top:917px" width="8" height="5" viewBox="0 0 8 5"><path d="M0 0h8L4 5z" fill="#222"/></svg>
<div class="a" style="left:47px;top:927px;width:1808px;height:29px;background:#f3f3f3;border-top:1px solid #c6c6c6"></div>
<svg class="a" style="left:74px;top:936px" width="5" height="8" viewBox="0 0 5 8"><path d="M5 0v8L0 4z" fill="#bbb"/></svg>
<svg class="a" style="left:102px;top:936px" width="5" height="8" viewBox="0 0 5 8"><path d="M0 0v8l5-4z" fill="#bbb"/></svg>
<div class="a" style="left:147px;top:927px;width:172px;height:25px;background:#fff;border:1px solid #c6c6c6;border-top:none;border-bottom:2px solid #217346"></div>
<div class="t" style="left:159px;top:933px;font-size:13px;font-weight:bold;color:#217346">AdminBookingHotelList</div>
<svg class="a" style="left:351px;top:932px" width="17" height="17" viewBox="0 0 17 17"><circle cx="8.5" cy="8.5" r="7.5" fill="none" stroke="#555" stroke-width="1.1"/><path d="M8.5 4.5v8M4.5 8.5h8" stroke="#555" stroke-width="1.2"/></svg>
<svg class="a" style="left:1131px;top:935px" width="4" height="13" viewBox="0 0 4 13"><circle cx="2" cy="2" r="1" fill="#777"/><circle cx="2" cy="6.5" r="1" fill="#777"/><circle cx="2" cy="11" r="1" fill="#777"/></svg>
<div class="a" style="left:1149px;top:933px;width:686px;height:16px;background:#f0f0f0"></div>
<div class="a" style="left:1149px;top:933px;width:16px;height:16px;border:1px solid #aaa;background:#fff"></div>
<svg class="a" style="left:1154px;top:937px" width="5" height="8" viewBox="0 0 5 8"><path d="M5 0v8L0 4z" fill="#222"/></svg>
<div class="a" style="left:1165px;top:933px;width:232px;height:16px;border:1px solid #aaa;background:#fff"></div>
<div class="a" style="left:1818px;top:933px;width:16px;height:16px;border:1px solid #aaa;background:#fff"></div>
<svg class="a" style="left:1824px;top:937px" width="5" height="8" viewBox="0 0 5 8"><path d="M0 0v8l5-4z" fill="#222"/></svg>
<div class="a" style="left:45px;top:956px;width:1812px;height:22px;background:#217346"></div>
<div class="t" style="left:58px;top:961.3px;font-size:12px;color:#fff;letter-spacing:-0.82px">Ready</div>
<svg class="a" style="left:107px;top:958px" width="17" height="17" viewBox="0 0 17 17"><path d="M8.5 1v7M6 5.5l2.5 2.5L11 5.5" fill="none" stroke="#fff" stroke-width="1.2"/><path d="M4 4a6 6 0 1 0 9 0" fill="none" stroke="#fff" stroke-width="1.2" stroke-dasharray="2 1.5"/></svg>
<div class="t" style="left:127px;top:961.3px;font-size:12px;color:#fff;letter-spacing:-0.18px">Accessibility: Good to go</div>
<svg class="a" style="left:1426px;top:958px" width="14" height="14" viewBox="0 0 14 14"><rect x="0.5" y="0.5" width="13" height="10" fill="#fff"/><path d="M4 13h6" stroke="#fff" stroke-width="1.5"/></svg>
<div class="t" style="left:1444px;top:961.3px;font-size:12px;color:#fff">Display Settings</div>
<div class="a" style="left:1546px;top:956px;width:40px;height:22px;background:#0e4d2b"></div>
<svg class="a" style="left:1559px;top:959px" width="13" height="11" viewBox="0 0 13 11"><path d="M0.5 0.5h12v10h-12zM0.5 3.8h12M0.5 7.2h12M4.5 0.5v10M8.5 0.5v10" fill="none" stroke="#fff" stroke-width="1"/></svg>
<svg class="a" style="left:1599px;top:959px" width="13" height="12" viewBox="0 0 13 12"><path d="M0.5 0.5h12v11h-12z M2.5 2.5h8v9h-8zM4 5h5M4 7h5" fill="none" stroke="#fff" stroke-width="1"/></svg>
<svg class="a" style="left:1638px;top:959px" width="13" height="11" viewBox="0 0 13 11"><path d="M0.5 0.5h5v10h-5zM7.5 0.5h5v10h-5z" fill="#fff" stroke="#fff" stroke-width="1"/><path d="M2 2h2M9 2h2" stroke="#217346"/></svg>
<div class="a" style="left:1672px;top:966px;width:6px;height:1px;background:#fff"></div>
<div class="a" style="left:1685px;top:966px;width:98px;height:1px;background:#fff"></div>
<div class="a" style="left:1732px;top:961px;width:4px;height:9px;background:#fff"></div>
<div class="t" style="left:1788px;top:959px;font-size:13px;color:#fff">+</div>
<div class="t" style="left:1810px;top:962px;font-size:11px;color:#fff">100%</div>
<div class="a" style="left:1856px;top:556px;width:1px;height:422px;background:#217346"></div>
<div class="rr" style="left:44px;top:554px;width:1810px;height:418px"></div>
<!--EXCEL-->
</body></html>
